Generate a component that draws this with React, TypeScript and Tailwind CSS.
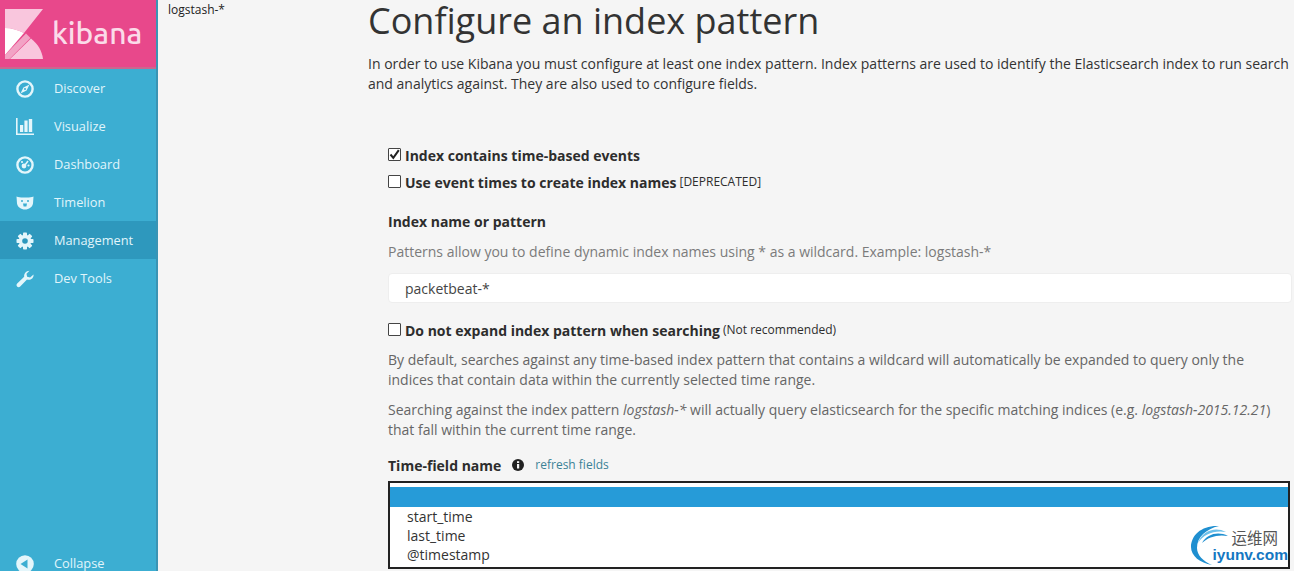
import React from "react";

const Compass = () => (
  <svg width="18" height="18" viewBox="0 0 18 18"><circle cx="9" cy="9" r="7.6" fill="none" stroke="#e4f6fb" strokeWidth="2.4" /><path d="M13.5 4.5L10.6 10.6 4.5 13.5 7.4 7.4Z" fill="#e4f6fb" /><circle cx="9" cy="9" r="1" fill="#3caed2" /></svg>
);
const Bars = () => (
  <svg width="18" height="18" viewBox="0 0 18 18" fill="#e4f6fb"><path d="M0 0h1.6v15.6H18V17H0Z" /><rect x="4" y="7" width="3.2" height="7" /><rect x="8.4" y="2.5" width="3.2" height="11.5" /><rect x="12.8" y="1" width="3.4" height="13" /></svg>
);
const Gauge = () => (
  <svg width="18" height="18" viewBox="0 0 18 18"><circle cx="9" cy="9" r="7.6" fill="none" stroke="#e4f6fb" strokeWidth="2.4" /><circle cx="8" cy="10" r="2.4" fill="#e4f6fb" /><path d="M9 9L12 5" stroke="#e4f6fb" strokeWidth="1.6" /><circle cx="6" cy="6" r="1.1" fill="#e4f6fb" /><circle cx="12.5" cy="9.5" r="1.1" fill="#e4f6fb" /></svg>
);
const Lion = () => (
  <svg width="18" height="18" viewBox="0 0 18 18"><path d="M0.5 2.5C3 3.7 6 3.5 9 3.5s6 .2 8.5-1L17 9.5c-.6 3.500-4 6-8 6s-7.400-2.500-8-6Z" fill="#e4f6fb" /><circle cx="6" cy="7" r="1" fill="#3caed2" /><circle cx="12" cy="7" r="1" fill="#3caed2" /><path d="M7 9.500h4l-.6 3H7.600Z" fill="#3caed2" /></svg>
);
const Gear = () => (
  <svg width="18" height="18" viewBox="0 0 18 18"><g fill="#e4f6fb">{[0, 45, 90, 135].map((a) => (<rect key={a} x="7" y="0.5" width="4" height="17" rx="0.8" transform={`rotate(${a} 9 9)`} />))}<circle cx="9" cy="9" r="6.2" /></g><circle cx="9" cy="9" r="2.800" fill="#2e98bd" /></svg>
);
const Wrench = () => (
  <svg width="18" height="18" viewBox="0 0 18 18"><path d="M17.500 4.500c.4 2.800-1.800 5.500-4.800 5.300-.7 0-1.200-.1-1.700-.4L4.200 16.500c-.9.9-2.300.9-3.100 0-.8-.9-.8-2.200.1-3L8.200 6.800C7.700 4 9.800.8 13.500.7l-3 3 .6 3 3 .7Z" fill="#e4f6fb" /></svg>
);
const Back = () => (
  <svg width="18" height="18" viewBox="0 0 18 18"><circle cx="9" cy="9" r="8.800" fill="#e4f6fb" /><path d="M4.500 9L11.500 4.500V13.500Z" fill="#3caed2" /></svg>
);

const items = [
  { label: "Discover", icon: <Compass /> },
  { label: "Visualize", icon: <Bars /> },
  { label: "Dashboard", icon: <Gauge /> },
  { label: "Timelion", icon: <Lion /> },
  { label: "Management", icon: <Gear />, active: true },
  { label: "Dev Tools", icon: <Wrench /> },
];

const Check = ({ checked }: { checked?: boolean }) => (
  <span className="w-[13px] h-[13px] border border-[#444] bg-white rounded-[1px] flex items-center justify-center shrink-0 mr-[4px] mb-[2px]">
    {checked && (
      <svg width="11" height="11" viewBox="0 0 11 11"><path d="M1.500 5.500L4.300 8.800 9.800 1.200" fill="none" stroke="#222" strokeWidth="2" /></svg>
    )}
  </span>
);

export default function App() {
  return (
    <div className="flex h-[571px] w-[1294px] overflow-hidden bg-[#f5f5f5] text-[#2d2d2d] font-['Open_Sans',sans-serif]">
      <aside className="w-[158px] shrink-0 bg-[#3caed2] flex flex-col border-r-2 border-[#3a94b4]">
        <div className="h-[69px] bg-[#e8488b] flex items-center border-b-2 border-[#c9688f] shrink-0">
          <svg width="38" height="50" viewBox="0 0 38 50" className="ml-[5px] mt-[1px]">
            <path d="M0 0H38L19 24C13 21 7 19 0 19Z" fill="#f9c6dd" />
            <path d="M0 19C7 19 13 21 19 24L0 46Z" fill="#ffffff" />
            <path d="M0 46L21 24.500 25.500 29 4.500 50H0Z" fill="#f2a3c5" />
            <path d="M5 50L26 29.500C33 35 37 42 38 50Z" fill="#f9c6dd" />
          </svg>
          <span className="ml-[9px] text-[#fbdbe9] text-[30px] font-medium leading-none mb-[1px] font-['Ubuntu','Open_Sans',sans-serif]">kibana</span>
        </div>
        <nav className="flex flex-col">
          {items.map((it) => (
            <div key={it.label} className={`h-[38px] flex items-center pl-[16px] pt-[2px] ${it.active ? "bg-[#2e98bd]" : ""}`}>
              <span className="w-[18px] h-[18px] flex mr-[20px]">{it.icon}</span>
              <span className="text-[12.8px] text-[#e0f5fb]">{it.label}</span>
            </div>
          ))}
        </nav>
        <div className="mt-auto h-[38px] flex items-center pl-[16px] translate-y-[12px]">
          <span className="w-[18px] h-[18px] flex mr-[20px]"><Back /></span>
          <span className="text-[12.8px] text-[#e0f5fb]">Collapse</span>
        </div>
      </aside>
      <div className="w-[210px] shrink-0 pl-[10px] text-[12px] leading-[20px] text-[#222]">logstash-*</div>
      <main className="flex-1 min-w-0">
        <h1 className="text-[36px] leading-[42px] text-[#333] whitespace-nowrap">Configure an index pattern</h1>
        <p className="mt-[12px] text-[14px] leading-[20px] text-[#333] w-[930px]">
          In order to use Kibana you must configure at least one index pattern. Index patterns are used to identify the Elasticsearch index to run search and analytics against. They are also used to configure fields.
        </p>
        <div className="ml-[20px] mt-[48px] w-[904px]">
          <div className="flex items-center h-[26px] text-[14px] font-bold"><Check checked />Index contains time-based events</div>
          <div className="mt-[1px] flex items-center h-[26px] text-[14px] font-bold"><Check />Use event times to create index names<span className="ml-[3px] text-[12px] font-normal">[DEPRECATED]</span></div>
          <div className="mt-[17px] text-[14px] leading-[20px] font-bold">Index name or pattern</div>
          <div className="mt-[10px] text-[14px] leading-[20px] text-[#7b7b7b]">Patterns allow you to define dynamic index names using * as a wildcard. Example: logstash-*</div>
          <div className="mt-[11px] h-[30px] bg-white border border-[#eeeeee] rounded-[4px] pl-[16px] flex items-center text-[14px] text-[#444]">packetbeat-*</div>
          <div className="mt-[14px] flex items-center h-[26px] text-[14px] font-bold"><Check />Do not expand index pattern when searching<span className="ml-[3px] text-[12px] font-normal">(Not recommended)</span></div>
          <p className="mt-[7px] text-[14px] leading-[20px] text-[#666]">By default, searches against any time-based index pattern that contains a wildcard will automatically be expanded to query only the indices that contain data within the currently selected time range.</p>
          <p className="mt-[10px] text-[14px] leading-[20px] text-[#666]">Searching against the index pattern <i>logstash-*</i> will actually query elasticsearch for the specific matching indices (e.g. <i>logstash-2015.12.21</i>) that fall within the current time range.</p>
          <div className="mt-[15px] flex items-center h-[20px]">
            <span className="text-[14px] font-bold">Time-field name</span>
            <svg width="12" height="12" viewBox="0 0 12 12" className="ml-[11px]"><circle cx="6" cy="6" r="6" fill="#222" /><rect x="5" y="5" width="2.200" height="4.500" fill="#f5f5f5" /><rect x="5" y="2.200" width="2.200" height="1.800" fill="#f5f5f5" /></svg>
            <span className="ml-[11px] text-[12px] text-[#3b8296]">refresh fields</span>
          </div>
          <div className="relative mt-[6px] h-[88px] w-[902px] border-2 border-[#222] bg-white">
            <div className="mt-[4px] h-[20px] bg-[#269bd8]" />
            <div className="pl-[17px] text-[14px] leading-[19px] text-[#333]">
              <div>start_time</div>
              <div>last_time</div>
              <div>@timestamp</div>
            </div>
            <div className="absolute right-[-2px] bottom-[-2px] w-[100px] h-[44px]">
              <svg width="44" height="44" viewBox="0 0 44 44" className="absolute left-0 top-0">
                <path d="M29 1C12 0 1 10 1 22C1 31 10 38 22 40C13 36 7 30 7 23C7 12 16 4 29 1Z" fill="#1f8fd0" />
                <path d="M36 7C25 1 12 6 8 18C14 9 24 5 36 7Z" fill="#6cc0ea" />
                <path d="M38 11C28 6 17 9 12 18C18 12 28 9 38 11Z" fill="#1f8fd0" />
              </svg>
              <div className="absolute right-[12px] top-[4px] text-[15.5px] leading-[16px] font-['Noto_Sans_CJK_SC',sans-serif] text-[#555] whitespace-nowrap">运维网</div>
              <div className="absolute right-[2px] top-[22px] text-[15.5px] leading-[16px] font-bold font-['Liberation_Sans',sans-serif] text-[#1477c2] whitespace-nowrap">iyunv.com</div>
            </div>
          </div>
        </div>
      </main>
    </div>
  );
}
